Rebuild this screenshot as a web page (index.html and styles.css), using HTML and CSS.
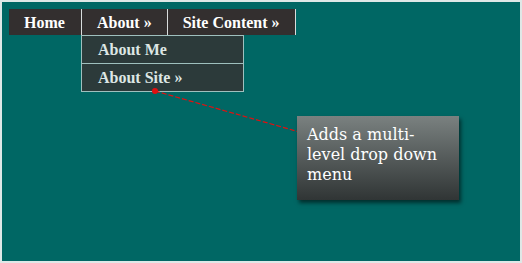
FILE: index.html
```html
<!DOCTYPE html>
<html lang="en">
<head>
  <meta charset="UTF-8">
  <meta name="viewport" content="width=device-width, initial-scale=1.0">
  <title>Multi-level Drop Down Menu</title>
  <link rel="stylesheet" href="styles.css">
</head>
<body>
  <div class="stage">
    <ul class="menu">
      <li class="menu-item"><a href="#">Home</a></li>
      <li class="menu-item open">
        <a href="#">About &raquo;</a>
        <ul class="submenu">
          <li><a href="#">About Me</a></li>
          <li><a href="#">About Site &raquo;</a></li>
        </ul>
      </li>
      <li class="menu-item"><a href="#">Site Content &raquo;</a></li>
    </ul>

    <!-- callout pointer -->
    <svg class="pointer" width="160" height="50" viewBox="0 0 160 50">
      <line x1="4" y1="4" x2="152" y2="46" stroke="#e01010" stroke-width="1.2" stroke-dasharray="5 2"/>
      <circle cx="4" cy="4" r="3" fill="#e01010"/>
    </svg>

    <div class="callout">Adds a multi-level drop down menu</div>
  </div>
</body>
</html>
```

FILE: styles.css
```css
body {
  margin: 0;
  padding: 0;
  background-color: #fff;
  font-family: "Liberation Serif", "Times New Roman", serif;
}
.stage {
  position: relative;
  box-sizing: border-box;
  width: 522px;
  height: 263px;
  border: 2px solid #dfe8e7;
  background-color: #006764;
  padding: 7px;
}
.menu {
  list-style: none;
  margin: 0;
  padding: 0;
  display: flex;
  width: fit-content;
  background-color: #332f2f;
}
.menu-item {
  position: relative;
  border-right: 1px solid #d8dcdc;
}
.menu-item > a {
  display: block;
  height: 25px;
  padding-top: 1px;
  line-height: 26px;
  padding-left: 15px;
  padding-right: 15px;
  color: #fff;
  font-weight: bold;
  font-size: 16px;
  text-decoration: none;
}
.menu-item:first-child > a {
  width: 42px;
}
.submenu {
  position: absolute;
  top: 26px;
  left: -1px;
  list-style: none;
  margin: 0;
  padding: 0;
  width: 161px;
  background-color: #2c3a3a;
  border: 1px solid #9fc0be;
}
.submenu li + li {
  border-top: 1px solid #9fc0be;
}
.submenu a {
  display: block;
  height: 27px;
  line-height: 27px;
  padding: 0 16px;
  color: #dde6e4;
  font-weight: bold;
  font-size: 16px;
  text-decoration: none;
}
.pointer {
  position: absolute;
  left: 149px;
  top: 85px;
}
.callout {
  position: absolute;
  left: 295px;
  top: 114px;
  box-sizing: border-box;
  width: 162px;
  height: 84px;
  padding: 9px 10px 0 10px;
  background: linear-gradient(#7a8180, #303535);
  box-shadow: 2px 3px 4px rgba(0, 0, 0, 0.55);
  color: #fff;
  font-family: "DejaVu Serif", serif;
  font-size: 16px;
  line-height: 20px;
}
```
